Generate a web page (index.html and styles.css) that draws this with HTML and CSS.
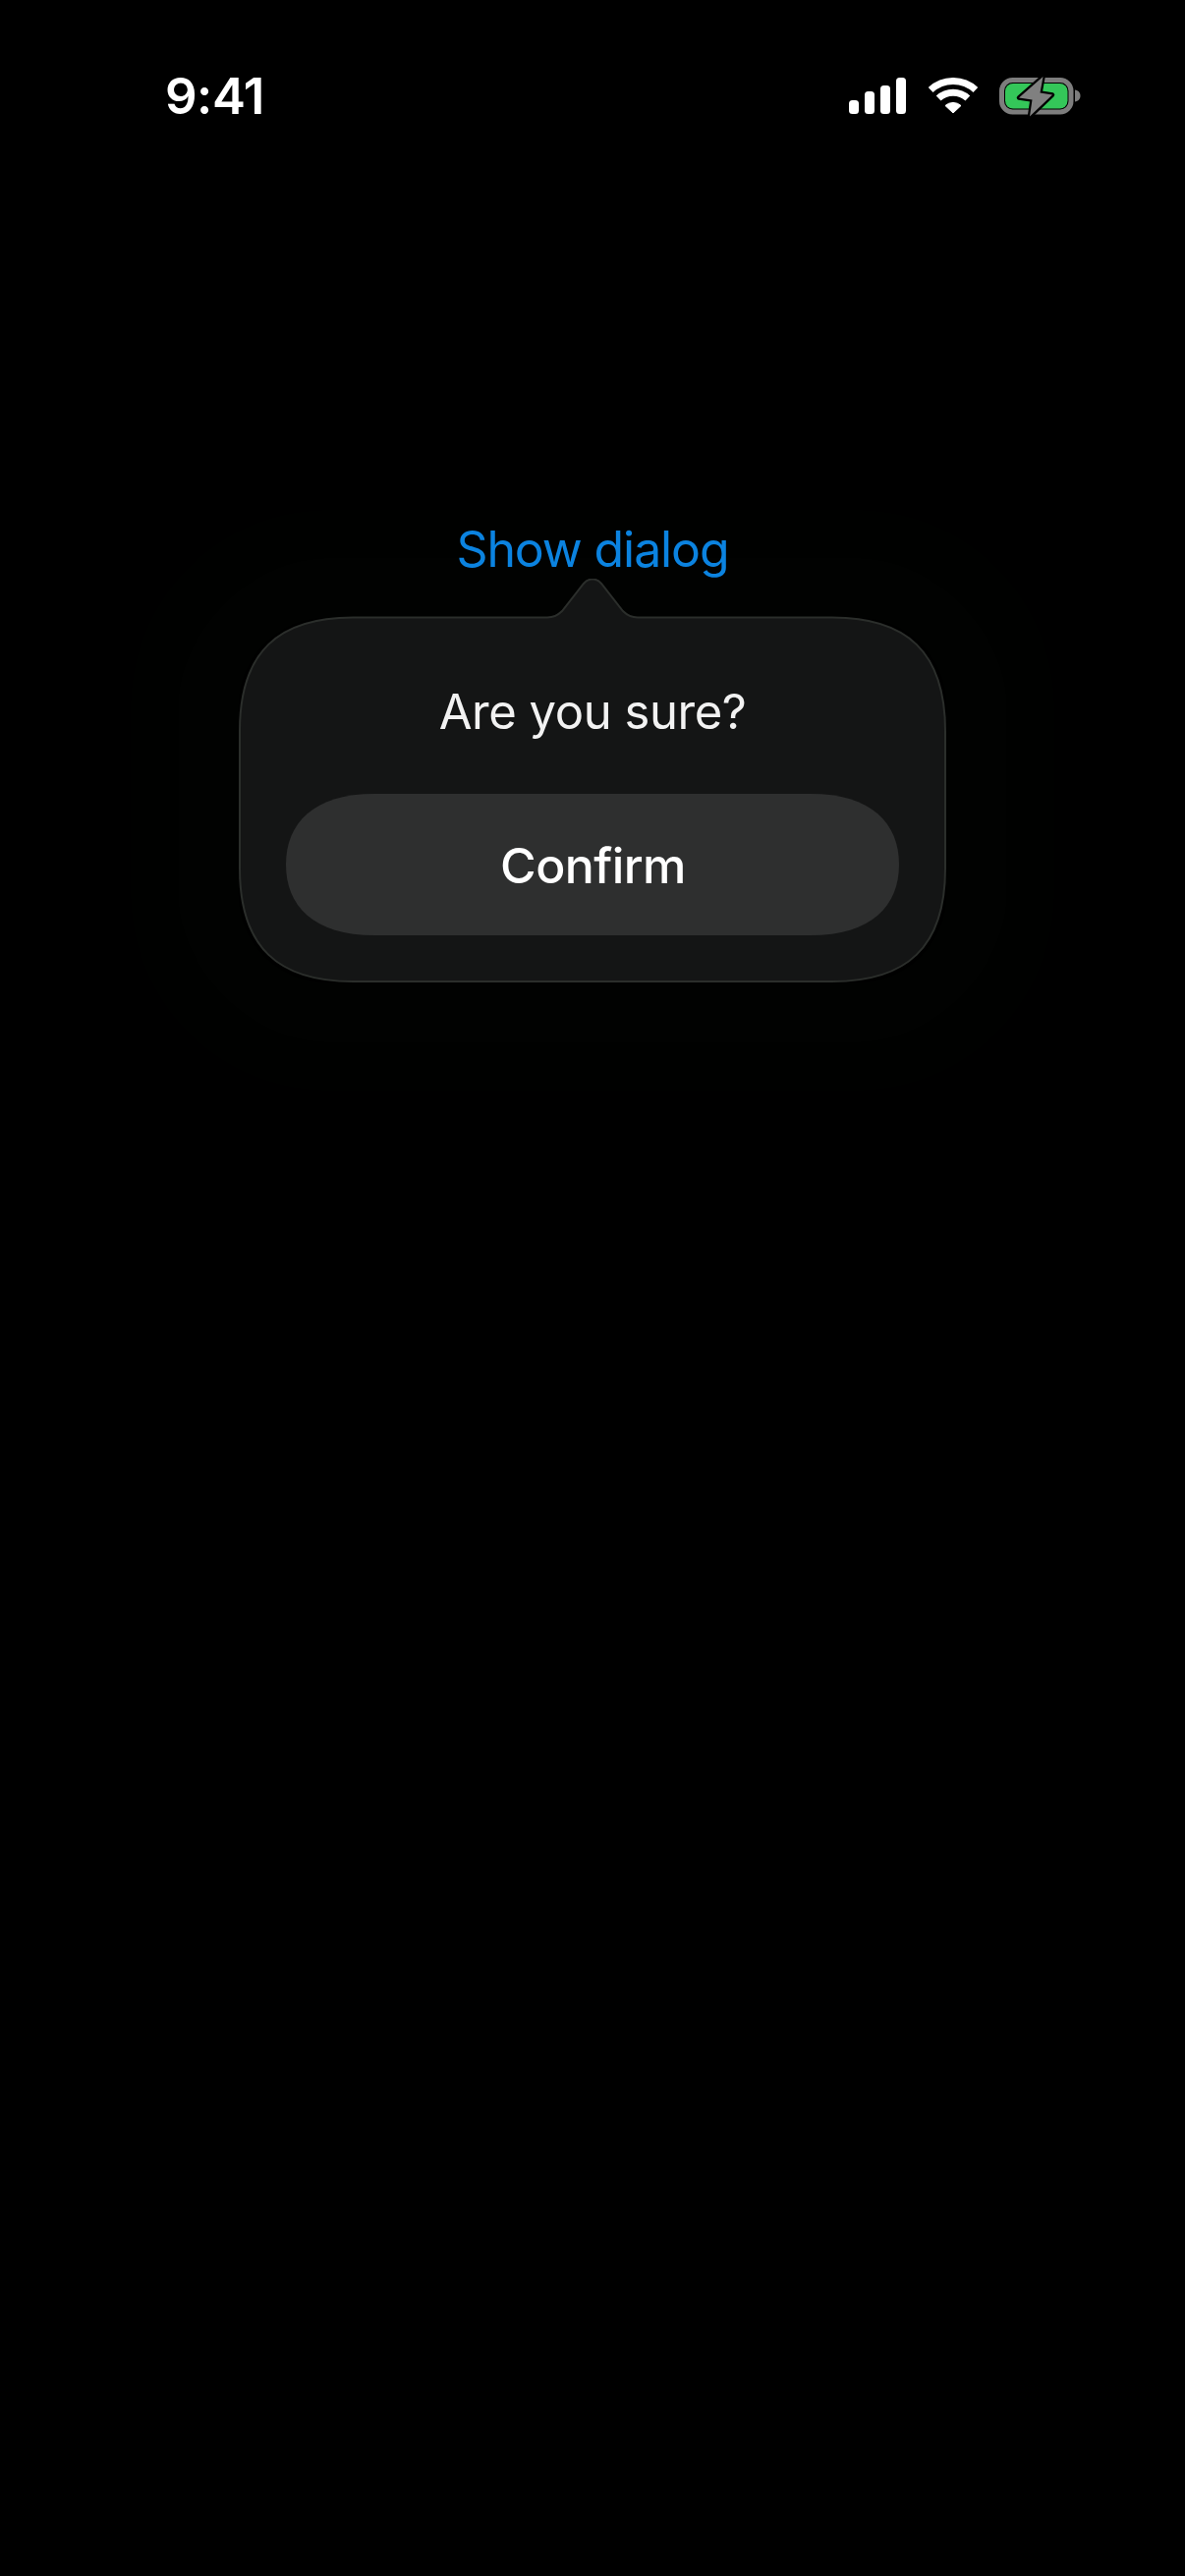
FILE: index.html
```html
<!DOCTYPE html>
<html lang="en">
<head>
<meta charset="utf-8">
<title>Show dialog</title>
<link rel="stylesheet" href="styles.css">
</head>
<body>
<div class="status">
  <span class="time">9:41</span>
  <div class="icons">
    <svg class="signal" viewBox="0 0 58 37"><rect x="0" y="23" width="10" height="14" rx="3.5"/><rect x="16" y="14" width="10" height="23" rx="3.5"/><rect x="32" y="8" width="10" height="29" rx="3.5"/><rect x="48" y="0" width="10" height="37" rx="3.5"/></svg>
    <svg class="wifi" viewBox="0 0 50 37"><path class="arc" d="M2.15 12.5A33.5 33.5 0 0 1 47.85 12.5"/><path class="arc" d="M10.13 21.06A21.8 21.8 0 0 1 39.87 21.06"/><path class="wedge" d="M25 36L17 28.5A12 12 0 0 1 33 28.5Z"/></svg>
    <svg class="battery" viewBox="0 -2 84 42"><rect class="shell" x="2.5" y="2.500" width="70.500" height="32.500" rx="11"/><rect class="charge" x="6" y="6" width="63.500" height="25.500" rx="8"/><path class="nub" d="M77 12.500C80.500 13 82.500 15.500 82.500 18.500C82.500 21.500 80.500 24 77 24.500Z"/><path class="bolt" d="M44.500 -1L20 20.500L33.500 22.500L31 39.500L54 17.500L41.500 15.500Z"/></svg>
  </div>
</div>
<main class="screen">
  <a class="trigger">Show dialog</a>
  <section class="dialog">
    <svg class="bubble" viewBox="0 0 720 411"><path d="M1 155C1 74 41 39.500 116 39.500L314 39.500C320 39.500 325 37 329 33L351 5C354 1.500 357 0.500 360 0.500C363 0.500 366 1.500 369 5L391 33C395 37 400 39.500 406 39.500L604 39.500C679 39.500 719 74 719 155L719 295C719 376 679 410 604 410L116 410C41 410 1 376 1 295Z"/></svg>
    <h2 class="title">Are you sure?</h2>
    <button class="confirm">Confirm</button>
  </section>
</main>
</body>
</html>
```

FILE: styles.css
```css
html, body {
  margin: 0;
  height: 2622px;
  background: #000;
  overflow: hidden;
  font-family: Inter, "Liberation Sans", sans-serif;
}

.status {
  display: flex;
  justify-content: space-between;
  align-items: flex-start;
  padding: 79px 105px 0 168px;
}

.time {
  color: #fff;
  font-size: 51px;
  font-weight: 600;
  line-height: 37px;
  letter-spacing: -0.5px;
}

.icons {
  display: flex;
  gap: 23px;
  align-items: flex-start;
}

.signal { width: 58px; height: 37px; fill: #fff; }
.wifi { width: 50px; height: 37px; }
.wifi .arc { fill: none; stroke: #fff; stroke-width: 7; }
.wifi .wedge { fill: #fff; stroke: #fff; stroke-width: 1; stroke-linejoin: round; }
.battery { width: 84px; height: 42px; margin-top: -2px; margin-left: -1px; overflow: visible; }
.shell { fill: none; stroke: #7d7d7d; stroke-width: 5; }
.charge { fill: #34c759; }
.nub { fill: #7d7d7d; }
.bolt { fill: #808080; stroke: #000; stroke-width: 4.5; stroke-linejoin: round; paint-order: stroke; }

.screen {
  display: flex;
  flex-direction: column;
  align-items: center;
  padding-top: 410px;
}

.trigger {
  position: relative;
  z-index: 1;
  color: #0b83e0;
  font-size: 50px;
  line-height: 60px;
  letter-spacing: -1.1px;
}

.dialog {
  position: relative;
  box-sizing: border-box;
  width: 720px;
  height: 371px;
  margin-top: 40px;
  padding: 66px 48px 47px;
  border-radius: 90px;
  box-shadow: 0 0 40px 110px #010201;
  text-align: center;
}

.bubble {
  position: absolute;
  left: 0;
  top: -40px;
  width: 720px;
  height: 411px;
  fill: #141515;
  stroke: #2b2e2b;
  stroke-width: 2;
}

.title {
  position: relative;
  margin: 0;
  color: #f2f2f2;
  font-size: 49px;
  font-weight: 400;
  line-height: 60px;
  letter-spacing: -0.45px;
}

.confirm {
  position: relative;
  display: block;
  width: 624px;
  height: 144px;
  margin-top: 53px;
  padding: 2px 0 0 1px;
  border: 0;
  background: #2e2f2f;
  clip-path: path("M0 72C0 30 28 0 90 0L534 0C596 0 624 30 624 72C624 114 596 144 534 144L90 144C28 144 0 114 0 72Z");
  color: #fff;
  font-family: inherit;
  font-size: 50px;
  font-weight: 500;
  letter-spacing: -0.6px;
}
```
